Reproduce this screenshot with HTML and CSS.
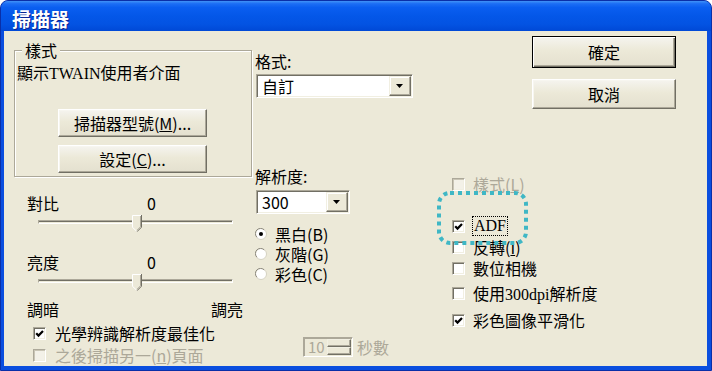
FILE: index.html
```html
<!DOCTYPE html>
<html lang="zh-Hant">
<head>
<meta charset="utf-8">
<title>掃描器</title>
<link rel="stylesheet" href="styles.css">
</head>
<body>
<div class="window">
  <div class="titlebar"><span class="title">掃描器</span></div>
  <div class="client">
    <div class="col col-left">
      <div class="group">
        <span class="legend">樣式</span>
        <div class="group-text">顯示<span class="lat">TWAIN</span>使用者介面</div>
        <button class="btn btn-model">掃描器型號(<u>M</u>)...</button>
        <button class="btn btn-setup">設定(<u>C</u>)...</button>
      </div>
      <div class="slider-head head-contrast"><span class="slider-label">對比</span><span class="slider-val">0</span></div>
      <div class="slider">
        <div class="track"></div>
        <svg class="thumb" width="10" height="17" viewBox="0 0 10 17"><path d="M0.5 12 V0.5 H9.5 V12 L5 16.5 Z" fill="#ece9d8"/><path d="M0.5 12.5 V0.5 H9" stroke="#fff" fill="none"/><path d="M9.5 0 V12.2 L5 16.7" stroke="#716f64" fill="none"/><path d="M8.5 1 V11.8 L5 15.3" stroke="#aca899" fill="none"/><path d="M0.5 12.3 L4.6 16.2" stroke="#fff" fill="none"/></svg>
      </div>
      <div class="slider-head head-bright"><span class="slider-label">亮度</span><span class="slider-val">0</span></div>
      <div class="slider">
        <div class="track"></div>
        <svg class="thumb" width="10" height="17" viewBox="0 0 10 17"><path d="M0.5 12 V0.5 H9.5 V12 L5 16.5 Z" fill="#ece9d8"/><path d="M0.5 12.5 V0.5 H9" stroke="#fff" fill="none"/><path d="M9.5 0 V12.2 L5 16.7" stroke="#716f64" fill="none"/><path d="M8.5 1 V11.8 L5 15.3" stroke="#aca899" fill="none"/><path d="M0.5 12.3 L4.6 16.2" stroke="#fff" fill="none"/></svg>
      </div>
      <div class="range-labels"><span>調暗</span><span>調亮</span></div>
      <div class="check check-ocr"><span class="cb"><svg width="9" height="9" viewBox="0 0 9 9"><path d="M1.2 4.2 L3.5 6.6 L8 2" fill="none" stroke="#000" stroke-width="2.2"/></svg></span><span class="ctext">光學辨識解析度最佳化</span></div>
      <div class="check check-next disabled"><span class="cb"></span><span class="ctext">之後掃描另一(<u>n</u>)頁面</span></div>
    </div>

    <div class="col col-mid">
      <div class="label">格式:</div>
      <div class="combo combo-format">
        <span class="combo-text">自訂</span>
        <span class="combo-btn"><svg width="8" height="4" viewBox="0 0 8 4"><path d="M0 0 H7 L3.5 4 Z" fill="#000"/></svg></span>
      </div>
      <div class="label label-res">解析度:</div>
      <div class="combo combo-res">
        <span class="combo-text">300</span>
        <span class="combo-btn"><svg width="8" height="4" viewBox="0 0 8 4"><path d="M0 0 H7 L3.5 4 Z" fill="#000"/></svg></span>
      </div>
      <div class="radios">
        <div class="radio"><svg width="12" height="12" viewBox="0 0 12 12"><circle cx="6" cy="6" r="5.5" fill="#fff" stroke="#d6d2c2"/><path d="M1.9 9.2 A5 5 0 0 1 9.2 1.9" fill="none" stroke="#8f8c80"/><circle cx="6" cy="6" r="2" fill="#000"/></svg><span>黑白(B)</span></div>
        <div class="radio"><svg width="12" height="12" viewBox="0 0 12 12"><circle cx="6" cy="6" r="5.5" fill="#fff" stroke="#d6d2c2"/><path d="M1.9 9.2 A5 5 0 0 1 9.2 1.9" fill="none" stroke="#8f8c80"/></svg><span>灰階(G)</span></div>
        <div class="radio"><svg width="12" height="12" viewBox="0 0 12 12"><circle cx="6" cy="6" r="5.5" fill="#fff" stroke="#d6d2c2"/><path d="M1.9 9.2 A5 5 0 0 1 9.2 1.9" fill="none" stroke="#8f8c80"/></svg><span>彩色(C)</span></div>
      </div>
      <div class="spin-row">
        <div class="spin">
          <span class="spin-text">10</span>
          <span class="spin-btns"><span class="spin-btn"></span><span class="spin-btn"></span></span>
        </div>
        <span class="spin-label">秒數</span>
      </div>
    </div>

    <div class="col col-right">
      <div class="buttons">
        <button class="btn btn-default">確定</button>
        <button class="btn btn-cancel">取消</button>
      </div>
      <div class="rchecks">
        <div class="check r1 disabled"><span class="cb"></span><span class="ctext">樣式(<u>L</u>)</span></div>
        <div class="check r2"><span class="cb"><svg width="9" height="9" viewBox="0 0 9 9"><path d="M1.2 4.2 L3.5 6.6 L8 2" fill="none" stroke="#000" stroke-width="2.2"/></svg></span><span class="ctext lat focus">ADF</span></div>
        <div class="check r3"><span class="cb"></span><span class="ctext">反轉(<u>I</u>)</span></div>
        <div class="check r4"><span class="cb"></span><span class="ctext">數位相機</span></div>
        <div class="check r5"><span class="cb"></span><span class="ctext">使用<span class="lat">300dpi</span>解析度</span></div>
        <div class="check r6"><span class="cb"><svg width="9" height="9" viewBox="0 0 9 9"><path d="M1.2 4.2 L3.5 6.6 L8 2" fill="none" stroke="#000" stroke-width="2.2"/></svg></span><span class="ctext">彩色圖像平滑化</span></div>
      </div>
      <svg class="annot" width="92" height="55" viewBox="0 0 92 55"><rect x="2" y="2" width="87" height="50" rx="11" ry="11" fill="none" stroke="#3fb7c5" stroke-width="4" stroke-dasharray="4 4"/></svg>
    </div>
  </div>
</div>
</body>
</html>
```

FILE: styles.css
```css
* { box-sizing: border-box; }
html, body { margin: 0; padding: 0; background: #fff; }
body {
  width: 712px; height: 371px; overflow: hidden;
  font-family: "Noto Sans CJK TC", "Noto Sans", sans-serif;
  font-size: 16px; line-height: 18px; color: #000;
}
u { text-decoration: underline; text-underline-offset: 1px; }

.window {
  width: 712px; height: 371px;
  display: flex; flex-direction: column;
  background: #0a4edf;
  border: 1px solid #0a2fa8;
  border-radius: 8px 8px 0 0;
  overflow: hidden;
}
.titlebar {
  height: 30px; flex: none;
  padding: 7px 0 0 11px;
  background: linear-gradient(to bottom, #4193f7 0%, #1c6ef5 9%, #0a5ef0 22%, #0457e8 50%, #0353e2 78%, #0049d6 100%);
}
.title {
  display: block;
  color: #fff; font-weight: bold; font-size: 19px; line-height: 22px;
  text-shadow: 1px 1px 0 #0b2590;
}
.client {
  flex: 1; display: flex;
  margin: 0 4px 4px 3px;
  background: #ece9d8;
}
.col { display: flex; flex-direction: column; align-items: flex-start; }
.col-left { width: 251px; flex: none; }
.col-mid { width: 182px; flex: none; padding-top: 21px; }
.col-right { flex: 1; position: relative; padding-top: 5px; }

.lat { font-family: "Liberation Serif", serif; }

/* group box */
.group {
  position: relative;
  width: 238px;
  margin: 19px 0 0 10px;
  padding: 12px 0 3px 2px;
  border: 1px solid #aca899;
  box-shadow: inset 1px 1px 0 #fff, 1px 1px 0 #fff;
}
.legend {
  position: absolute; top: -10px; left: 7px;
  padding: 0 3px; background: #ece9d8;
}
.btn {
  display: flex; align-items: center; justify-content: center;
  font-family: inherit; font-size: 16px; line-height: 18px; color: #000;
  height: 28px; padding: 0;
  background: linear-gradient(to bottom, #f5f4ef 0%, #ece9d8 45%, #e4e0cf 100%);
  border: 1px solid; border-color: #fff #716f64 #716f64 #fff;
  box-shadow: inset -1px -1px 0 #aca899, inset 1px 1px 0 #f7f6f0;
}
.btn-model { width: 149px; margin: 26px 0 0 41px; }
.btn-setup { width: 149px; margin: 8px 0 0 41px; }

/* sliders */
.slider-head { display: flex; margin-left: 23px; }
.head-contrast { margin-top: 17px; }
.head-bright { margin-top: 22px; }
.slider-label { width: 120px; }
.slider {
  position: relative; display: flex; align-items: center;
  height: 18px; width: 195px; margin: 1px 0 0 34px;
}
.track {
  width: 100%; height: 4px;
  border: 1px solid; border-color: #aca899 #fff #fff #aca899;
  box-shadow: inset 0 1px 0 #716f64;
}
.thumb { position: absolute; left: 94px; top: 2px; }
.range-labels {
  display: flex; justify-content: space-between;
  width: 216px; margin: 10px 0 0 23px;
}

/* checkboxes */
.check { display: flex; align-items: center; height: 18px; gap: 9px; white-space: nowrap; }
.ctext { display: block; height: 18px; line-height: 18px; }
.cb {
  width: 13px; height: 13px; flex: none;
  display: flex; align-items: center; justify-content: center;
  background: #fff;
  border: 1px solid; border-color: #aca899 #fff #fff #aca899;
  box-shadow: inset 1px 1px 0 #716f64, inset -1px -1px 0 #f1efe2;
}
.disabled { color: #aca899; }
.disabled .cb { background: #f3f1e8; box-shadow: inset 1px 1px 0 #c9c5b5, inset -1px -1px 0 #f1efe2; }
.check-ocr { margin: 6px 0 0 29px; }
.check-next { margin: 4px 0 0 29px; }

/* middle column */
.label-res { margin-top: 69px; }
.combo {
  display: flex; height: 24px;
  margin: 4px 0 0 1px;
  background: #fff;
  border: 1px solid; border-color: #aca899 #fff #fff #aca899;
  box-shadow: inset 1px 1px 0 #716f64, inset -1px -1px 0 #f1efe2;
  padding: 1px;
}
.combo-format { width: 157px; }
.combo-res { width: 94px; margin-top: 5px; }
.combo-text { flex: 1; padding-left: 4px; line-height: 20px; }
.combo-btn {
  width: 22px; height: 20px; flex: none;
  display: flex; align-items: center; justify-content: center;
  background: #ece9d8;
  border: 1px solid; border-color: #f1efe2 #716f64 #716f64 #f1efe2;
  box-shadow: inset -1px -1px 0 #aca899, inset 1px 1px 0 #fff;
}
.radios { margin-top: 10px; }
.radio { display: flex; align-items: center; gap: 8px; height: 20px; }
.spin-row { display: flex; align-items: center; margin: 53px 0 0 48px; gap: 4px; color: #aca899; }
.spin {
  display: flex; width: 50px; height: 20px;
  border: 1px solid; border-color: #aca899 #fff #fff #aca899;
  box-shadow: inset 1px 1px 0 #aca899;
  background: #ece9d8;
  padding: 1px;
}
.spin-text { flex: 1; padding-left: 3px; line-height: 16px; font-size: 15px; }
.spin-btns { width: 24px; display: flex; flex-direction: column; }
.spin-btn {
  flex: 1;
  border: 1px solid; border-color: #f1efe2 #716f64 #716f64 #f1efe2;
  box-shadow: inset -1px -1px 0 #aca899;
}

/* right column */
.buttons { display: flex; flex-direction: column; margin-left: 95px; }
.btn-default {
  width: 144px; height: 32px;
  border: 1px solid #000;
  box-shadow: inset 1px 1px 0 #fff, inset -1px -1px 0 #716f64, inset -2px -2px 0 #aca899;
}
.btn-cancel { width: 144px; height: 30px; margin-top: 11px; }
.rchecks { margin: 66px 0 0 15px; }
.r2 { margin-top: 24px; }
.r3 { margin-top: 3px; }
.r4 { margin-top: 3px; }
.r5 { margin-top: 7px; }
.r6 { margin-top: 9px; }
.rchecks .check { gap: 8px; }
.focus { outline: 1px dotted #000; outline-offset: 0; padding: 0 1px; }
.annot { position: absolute; left: 0; top: 160px; }
```
